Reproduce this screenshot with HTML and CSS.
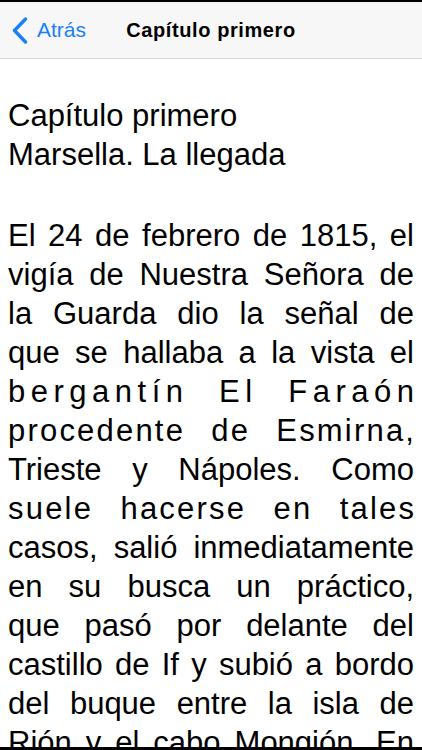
FILE: index.html
```html
<!DOCTYPE html>
<html lang="es">
<head>
<meta charset="utf-8">
<title>Capítulo primero</title>
<link rel="stylesheet" href="styles.css">
</head>
<body>
<div class="screen">
  <div class="topbar"></div>
  <nav class="navbar">
    <a class="back" href="#">
      <svg class="chevron" width="16" height="27" viewBox="0 0 16 27" aria-hidden="true">
        <path d="M13.5 2 L2.5 13.5 L13.5 25" fill="none" stroke="currentColor" stroke-width="3.4" stroke-linecap="round" stroke-linejoin="round"/>
      </svg>
      <span class="back-label">Atrás</span>
    </a>
    <h1 class="nav-title">Capítulo primero</h1>
    <div class="nav-spacer"></div>
  </nav>
  <main class="content">
    <h2 class="chapter">
      <span class="chapter-line">Capítulo primero</span>
      <span class="chapter-line">Marsella. La llegada</span>
    </h2>
    <p class="text">
      <span class="ln">El 24 de febrero de 1815, el</span>
      <span class="ln">vigía de Nuestra Señora de</span>
      <span class="ln">la Guarda dio la señal de</span>
      <span class="ln">que se hallaba a la vista el</span>
      <span class="ln spread-wide">bergantín El Faraón</span>
      <span class="ln spread-light">procedente de Esmirna,</span>
      <span class="ln">Trieste y Nápoles. Como</span>
      <span class="ln spread-light">suele hacerse en tales</span>
      <span class="ln">casos, salió inmediatamente</span>
      <span class="ln">en su busca un práctico,</span>
      <span class="ln">que pasó por delante del</span>
      <span class="ln">castillo de If y subió a bordo</span>
      <span class="ln">del buque entre la isla de</span>
      <span class="ln">Rión y el cabo Mongión. En</span>
    </p>
  </main>
  <div class="bottombar"></div>
</div>
</body>
</html>
```

FILE: styles.css
```css
* {
  box-sizing: border-box;
}

html, body {
  margin: 0;
  padding: 0;
  background: #ffffff;
}

body {
  font-family: "Liberation Sans", Arial, Helvetica, sans-serif;
  color: #000000;
}

.screen {
  width: 422px;
  height: 750px;
  display: flex;
  flex-direction: column;
  overflow: hidden;
  background: #ffffff;
}

.topbar {
  height: 2px;
  flex: none;
  background: #000000;
}

.navbar {
  height: 57px;
  flex: none;
  display: grid;
  grid-template-columns: 1fr auto 1fr;
  align-items: center;
  background: #f7f7f7;
  border-bottom: 1px solid #d6d6d6;
}

.back {
  display: flex;
  align-items: center;
  gap: 9px;
  padding-left: 12px;
  color: #1a7ff9;
  text-decoration: none;
}

.chevron {
  display: block;
  flex: none;
}

.back-label {
  font-size: 21px;
  line-height: 24px;
}

.nav-title {
  margin: 0;
  font-size: 20px;
  line-height: 24px;
  letter-spacing: 0.6px;
  font-weight: bold;
  color: #000000;
  white-space: nowrap;
}

.content {
  flex: 1;
  overflow: hidden;
  padding: 37px 8px 0;
}

.chapter {
  margin: 0;
  font-size: 31px;
  line-height: 39px;
  font-weight: normal;
}

.chapter-line {
  display: block;
}

.text {
  margin: 42px 0 0;
  font-size: 31px;
  line-height: 39px;
}

.ln {
  display: block;
  white-space: nowrap;
  text-align: justify;
  text-align-last: justify;
}

.spread-wide {
  letter-spacing: 5.5px;
  margin-right: -5.5px;
}

.spread-light {
  letter-spacing: 2.2px;
  margin-right: -2.2px;
}

.bottombar {
  height: 3px;
  flex: none;
  background: #000000;
}
```
